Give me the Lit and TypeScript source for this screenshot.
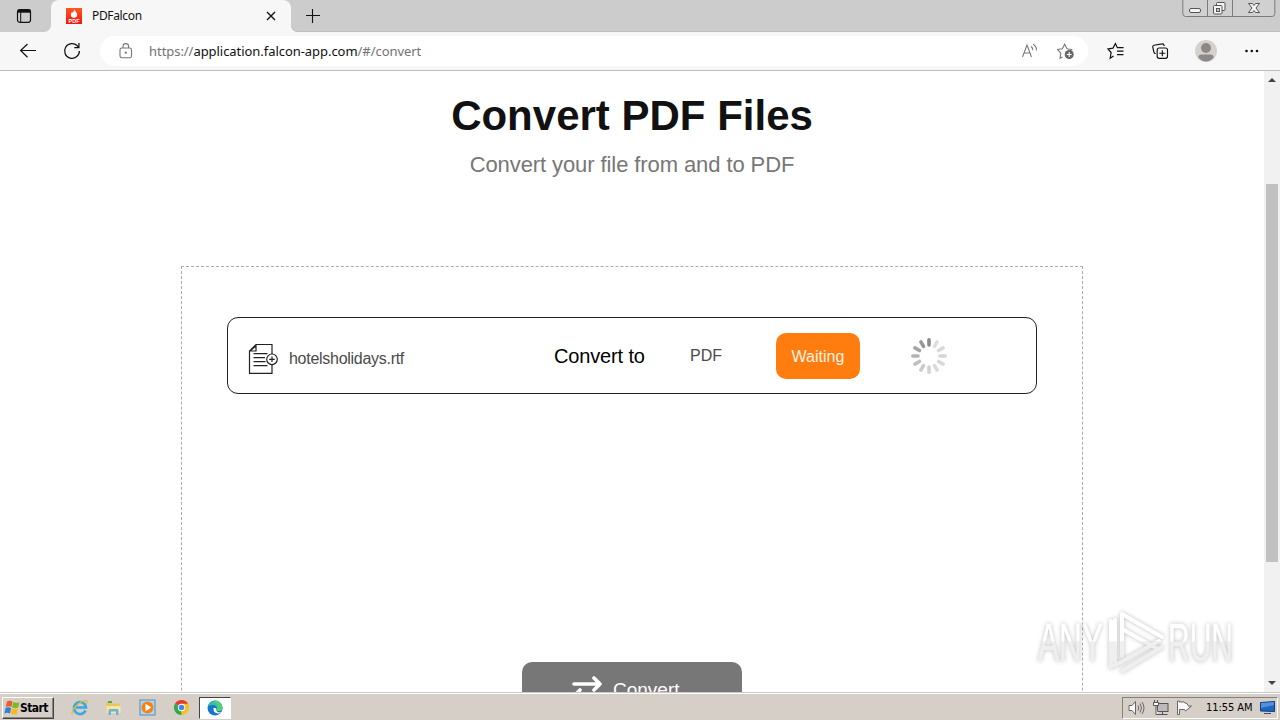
import { LitElement, html, svg, css } from "lit";
import { customElement, property } from "lit/decorators.js";

@customElement("browser-header")
export class BrowserHeader extends LitElement {
    static styles = [
        css`
        :host {
            display: block;
            height: 71px;
            font-family: "Noto Sans", sans-serif;
            color: #111;
        }

        svg {
            display: block;
            flex: none;
        }

        .tabs {
            display: flex;
            height: 32px;
            background: #cccccc;
        }

        .side {
            width: 51px;
            height: 32px;
            box-sizing: border-box;
            padding: 8px 0 0 16px;
            border-bottom-right-radius: 7px;
            background: #cccccc;
        }

        .under {
            background: #f7f7f7;
            display: flex;
        }

        .under.wide {
            flex: 1;
        }

        .tab {
            display: flex;
            align-items: center;
            width: 240px;
            height: 32px;
            box-sizing: border-box;
            padding: 0 15px 0 15px;
            background: #f7f7f7;
            border-radius: 8px 8px 0 0;
        }

        .corner {
            background: #cccccc;
        }

        .tab-title {
            flex: 1;
            margin-left: 10px;
            font-size: 12px;
            letter-spacing: -0.35px;
            line-height: 32px;
        }

        .rest {
            flex: 1;
            display: flex;
            justify-content: space-between;
            background: #cccccc;
            border-bottom-left-radius: 7px;
            box-shadow: inset 0 -1px 0 #bdbdbd;
        }

        .plus {
            margin: 8px 0 0 14px;
        }

        .window {
            margin-right: 4px;
        }

        .toolbar {
            display: flex;
            align-items: center;
            height: 38px;
            background: #f7f7f7;
            border-bottom: 1px solid #bcbcbc;
        }

        .back {
            margin-left: 19px;
        }

        .reload {
            margin-left: 26px;
        }

        .address {
            display: flex;
            align-items: center;
            width: 988px;
            height: 30px;
            margin-left: 19px;
            box-sizing: border-box;
            padding: 0 12px 0 18px;
            border-radius: 15px;
            background: #fff;
        }

        .url {
            flex: 1;
            margin-left: 15px;
            font-size: 13px;
            letter-spacing: -0.05px;
            white-space: nowrap;
            color: #727272;
        }

        .url b {
            font-weight: 400;
            color: #111;
        }

        .address .star {
            margin-left: 17px;
        }

        .favorites {
            margin-left: 19px;
        }

        .collections {
            margin-left: 26px;
        }

        .profile {
            margin-left: 26px;
        }

        .more {
            margin-left: 27px;
        }
    `,
    ];

    render() {
        return html`
        <div class="tabs">
            <div class="under"><div class="side">
                <svg width="16" height="16" viewBox="0 0 16 16" fill="none" stroke="#111">
                    <rect x="1.5" y="1.7" width="13" height="12.6" rx="2.2" stroke-width="1.2"/>
                    <path d="M1.5 3.2h13" stroke-width="3"/>
                    <path d="M4.7 4v10" stroke-width="1"/>
                </svg>
            </div></div>
            <div class="corner"><div class="tab">
                <svg width="16" height="16" viewBox="0 0 16 16">
                    <defs>
                        <linearGradient id="fav" x1="0" y1="0" x2="0" y2="1">
                            <stop offset="0" stop-color="#ff5a1e"/>
                            <stop offset="1" stop-color="#ee1410"/>
                        </linearGradient>
                    </defs>
                    <rect width="16" height="16" fill="url(#fav)"/>
                    <path d="M8.2 1.2C8.6 3 11.2 4.2 11.2 6.6a3.2 3.2 0 0 1-6.4 0c0-1.3.7-1.9 1.2-2.7l.8.9C7.6 3.8 7.9 2.6 8.2 1.2z" fill="#fff"/>
                    <text x="8" y="15" text-anchor="middle" textLength="11" font-family="Liberation Sans, sans-serif" font-size="5.4" font-weight="700" fill="#fff">PDF</text>
                </svg>
                <span class="tab-title">PDFalcon</span>
                <svg width="10" height="10" viewBox="0 0 10 10" stroke="#111" stroke-width="1.4">
                    <path d="M1 1l8 8M9 1l-8 8"/>
                </svg>
            </div></div>
            <div class="under wide"><div class="rest">
                <svg class="plus" width="16" height="16" viewBox="0 0 16 16" stroke="#111" stroke-width="1.1">
                    <path d="M1 7.5h14M7.5 1v14"/>
                </svg>
                <svg class="window" width="94" height="18" viewBox="0 0 94 18" fill="none">
                    <path d="M.8 0v13.500q0 3 3 3h86q3 0 3-3V0" fill="#d0d0d0" stroke="#7b7b7b"/>
                    <path d="M25.500 0v16M50.500 0v16" stroke="#7b7b7b"/>
                    <rect x="7.500" y="8.500" width="11" height="4" rx="1.500" fill="#f4f4f4" stroke="#555"/>
                    <rect x="34.500" y="2.500" width="8.500" height="8" rx="1" fill="#f4f4f4" stroke="#555"/>
                    <rect x="31.500" y="5.500" width="8.500" height="8.500" rx="1" fill="#f4f4f4" stroke="#555"/>
                    <rect x="34.500" y="8.500" width="3" height="3" fill="#ccc" stroke="#555"/>
                    <path d="M66.500 3.500h4l1.500 2 1.500-2h4L74 8l3.500 4.500h-4L72 10.500l-1.500 2h-4L70 8z" fill="#f4f4f4" stroke="#555"/>
                </svg>
            </div></div>
        </div>
        <div class="toolbar">
            <svg class="back" width="18" height="16" viewBox="0 0 18 16" fill="none" stroke="#111" stroke-width="1.2">
                <path d="M17 7.500H1.500M8.500 1L1.600 7.500l6.900 6.800"/>
            </svg>
            <svg class="reload" width="18" height="18" viewBox="0 0 18 18" fill="none" stroke="#111" stroke-width="1.25">
                <path d="M16.400 9A7.400 7.400 0 1 1 14.300 3.800L15.500 5.200M15.900 1v4.600h-4.600"/>
            </svg>
            <div class="address">
                <svg width="16" height="18" viewBox="0 0 16 18" fill="none" stroke="#777" stroke-width="1.100">
                    <rect x="2" y="6" width="11.500" height="9.700" rx="1.800"/>
                    <path d="M5 6V4.400a2.800 2.800 0 0 1 5.600 0V6"/>
                    <circle cx="7.750" cy="10.700" r=".6" fill="#777"/>
                </svg>
                <span class="url">https://<b>application.falcon-app.com</b>/#/convert</span>
                <svg width="18" height="18" viewBox="0 0 18 18" fill="none" stroke="#777" stroke-width="1.050">
                    <path d="M.5 15L5 3l4.500 12M2.100 11h5.900M9 4.500a4 4 0 0 1 1.800 3.800M11 2.300a7 7 0 0 1 3.500 6.200"/>
                </svg>
                <svg class="star" width="19" height="18" viewBox="0 0 19 18">
                    <path d="M5.500 15l-2.500 1.200.8-5.100L.6 7.500l4.700-.8L7.700 2.200l2.300 4.500 4.700.8-1.500 1.500" fill="none" stroke="#777" stroke-width="1.100"/>
                    <circle cx="12.200" cy="12.500" r="4.500" fill="#666"/>
                    <path d="M9.700 12.500h5M12.200 10v5" stroke="#fff" stroke-width="1.100"/>
                </svg>
            </div>
            <svg class="favorites" width="18" height="18" viewBox="0 0 18 18" fill="none" stroke="#111" stroke-width="1.200">
                <path d="M6.500 14l-3.300 2.200.9-5.700L1 6.900l5-.8L8.400 1.500l2 4.200h6.200M10 9.200h6.500M10 12.700h6.500"/>
            </svg>
            <svg class="collections" width="18" height="18" viewBox="0 0 18 18" fill="none" stroke="#111" stroke-width="1.150">
                <rect x="6.200" y="6" width="10.300" height="10.300" rx="2"/>
                <path d="M11.300 8.200v6M8.300 11.200h6M13.300 4l-.5-1.300q-.5-1-1.600-.8L3 3.200q-1.500.4-1.300 1.800l1.200 5q.4 1.500 1.800 1.800"/>
            </svg>
            <svg class="profile" width="22" height="22" viewBox="0 0 22 22">
                <circle cx="11" cy="11" r="11" fill="#d4d1ce"/>
                <circle cx="11" cy="8" r="5" fill="#8c8885"/>
                <path d="M3.300 17.500q0-3 3.500-3h8.400q3.500 0 3.500 3-3.500 4-7.700 4t-7.700-4z" fill="#8c8885"/>
            </svg>
            <svg class="more" width="16" height="4" viewBox="0 0 16 4" fill="#111">
                <circle cx="2.500" cy="2" r="1.300"/><circle cx="7.800" cy="2" r="1.300"/><circle cx="13" cy="2" r="1.300"/>
            </svg>
        </div>
        `;
    }
}

@customElement("file-row")
export class FileRow extends LitElement {
    @property() name = "";
    @property() target = "";
    @property() status = "";

    static styles = [
        css`
        :host {
            display: grid;
            grid-template-columns: 326px 136px 86px 84px 1fr;
            align-items: center;
            height: 77px;
            box-sizing: border-box;
            border: 1px solid #222;
            border-radius: 11px;
            font-family: "Liberation Sans", Arial, sans-serif;
            font-size: 16px;
            color: #4a4a4a;
        }

        .file {
            display: flex;
            align-items: center;
            padding: 6px 0 0 20px;
        }

        .name {
            margin-left: 10px;
            letter-spacing: -0.28px;
        }

        .label {
            padding-top: 1px;
            font-size: 20px;
            letter-spacing: -0.15px;
            color: #000;
        }

        .status {
            height: 46px;
            box-sizing: border-box;
            padding-top: 1px;
            border-radius: 10px;
            background: #ff7d0f;
            color: #fff3e4;
            line-height: 46px;
            text-align: center;
        }

        .spinner {
            margin-left: 50px;
        }
    `,
    ];

    render() {
        const shades = ["#8b8b8b", "#dedede", "#d9d9d9", "#d6d6d6", "#d8d8d8", "#d9d9d9", "#d2d2d2", "#cbcbcb", "#c0c0c0", "#b3b3b3", "#a5a5a5", "#989898"];
        return html`
        <div class="file">
            <svg width="31" height="32" viewBox="0 0 31 32" fill="none" stroke="#222" stroke-width="1.200">
                <path d="M24 11V1.500H8L1.500 8v22.300H24V21M8 1.500V8H1.500M2.500 7.500L8 3"/>
                <path d="M5.500 10.700h14M5.500 14.700h11.500M5.500 18.700h12M5.500 22.700h14"/>
                <circle cx="24" cy="16.300" r="5.300"/>
                <path d="M21.200 16.300h5.600M24 13.500v5.600"/>
            </svg>
            <span class="name">${this.name}</span>
        </div>
        <span class="label">Convert to</span>
        <span>${this.target}</span>
        <div class="status">${this.status}</div>
        <svg class="spinner" width="38" height="38" viewBox="-19 -19 38 38" stroke-width="3.600" stroke-linecap="round">
            ${shades.map((shade, i) => svg`<path d="M0 -16.200V-11" stroke=${shade} transform="rotate(${i * 30})"/>`)}
        </svg>
        `;
    }
}

@customElement("desktop-taskbar")
export class DesktopTaskbar extends LitElement {
    static styles = [
        css`
        :host {
            display: flex;
            align-items: center;
            height: 28px;
            box-sizing: border-box;
            padding: 3px 2px 1px;
            border-top: 1px solid #cdcac5;
            box-shadow: inset 0 1px 0 #fff;
            background: #d5cfc8;
            font-family: "DejaVu Sans Condensed", "DejaVu Sans", sans-serif;
            font-size: 11px;
            color: #000;
        }

        svg {
            display: block;
            flex: none;
        }

        .start {
            display: flex;
            align-items: center;
            width: 52px;
            height: 22px;
            box-sizing: border-box;
            padding-left: 1px;
            border: 1px solid;
            border-color: #fff #444 #444 #fff;
            box-shadow: inset -1px -1px 0 #8a8680;
            font-size: 12px;
            font-weight: 700;
            letter-spacing: -0.55px;
        }

        .apps {
            display: flex;
            align-items: center;
            flex: 1;
            gap: 17px;
            padding-left: 17px;
        }

        .active {
            display: flex;
            align-items: center;
            justify-content: center;
            width: 32px;
            height: 22px;
            margin-left: -8px;
            box-sizing: border-box;
            border: 1px solid;
            border-color: #444 #fff #fff #444;
            background: #fff;
        }

        .tray {
            display: flex;
            align-items: center;
            width: 156px;
            height: 22px;
            box-sizing: border-box;
            padding-left: 5px;
            border: 1px solid;
            border-color: #85817b #fff #fff #85817b;
        }

        .tray svg {
            margin-right: 8px;
        }

        .clock {
            flex: 1;
            margin-left: 5px;
            white-space: nowrap;
            letter-spacing: -0.05px;
        }

        .tray svg.desktop {
            margin-right: 1px;
        }
    `,
    ];

    render() {
        return html`
        <div class="start">
            <svg width="16" height="16" viewBox="0 0 16 16">
                <path d="M3 1.500q2.800-1.700 5.500 0L7.500 7q-2.800-1.400-5.700 0z" fill="#ee5a24"/>
                <path d="M9.200 2q2.700 1.400 6.300.2L14.200 7.500q-3 1.300-6 0z" fill="#7cb928"/>
                <path d="M1.600 7.900q2.700-1.400 5.500 0L6 13.500q-2.700-1.400-5.600 0z" fill="#2f80d8"/>
                <path d="M8 8.500q3 1.200 6 .2L12.800 14q-3 1-5.900-.3z" fill="#fbb914"/>
            </svg>
            <span>Start</span>
        </div>
        <div class="apps">
            <svg width="17" height="17" viewBox="0 0 17 17" fill="none">
                <path d="M14.500 11.500A6 6 0 1 1 15 8.500H5" stroke="#38a8e4" stroke-width="2.600"/>
                <path d="M1.500 15.500C-1 12 9 1 15.500 1.700q1.200.6.200 3" stroke="#e8b833" stroke-width="1.200"/>
            </svg>
            <svg width="17" height="17" viewBox="0 0 17 17">
                <path d="M1 3h5l1 1.500h8V14H1z" fill="#e9c566"/>
                <path d="M3 2h4v2H3z" fill="#54a858"/>
                <path d="M1.500 7h14v7h-14z" fill="#f8e6a0"/>
                <path d="M3.500 16v-4.500q0-1.500 1.500-1.500h7q1.500 0 1.500 1.500V16h-2.500v-3.500h-5V16z" fill="#68b5df"/>
            </svg>
            <svg width="17" height="17" viewBox="0 0 17 17">
                <rect x="1" y="1" width="15" height="15" fill="#b4d4ee" stroke="#4f8fc4"/>
                <circle cx="8.500" cy="8.500" r="6" fill="#f58212"/>
                <path d="M6.500 4.800l5.800 3.700-5.800 3.700z" fill="#fff"/>
            </svg>
            <svg width="17" height="17" viewBox="0 0 17 17">
                <circle cx="8.500" cy="8.500" r="7.500" fill="#fbc116"/>
                <path d="M8.500 8.500L2 4.700A7.500 7.500 0 0 1 15 4.700z" fill="#e33b2e"/>
                <path d="M8.500 8.500V16A7.500 7.500 0 0 1 2 4.700z" fill="#2da94f"/>
                <path d="M8.500 16l3.300-5.500L15 4.700H8.500z" fill="#fbc116"/>
                <circle cx="8.500" cy="8.500" r="3.700" fill="#fff"/>
                <circle cx="8.500" cy="8.500" r="2.800" fill="#4285f4"/>
            </svg>
            <div class="active">
                <svg width="16" height="16" viewBox="0 0 16 16">
                    <circle cx="8" cy="8" r="7.500" fill="#1577c9"/>
                    <path d="M.6 7A7.500 7.500 0 0 1 15.500 8q0 3-3.500 3-2.500 0-2.500-1.200C11 7 8 4.500 5 5 2.500 5.300 1 6 .6 7z" fill="#35bfae"/>
                    <path d="M9 .7q6 .8 6.500 7.300 0 3-3.500 3-2.500 0-2.500-1.200C11.500 7 11 4 7 2.500z" fill="#55cf70"/>
                    <path d="M6.500 8q-.5 4.500 4 5.500 2 .3 4-1-3 .2-4.500-1-.8-.8-.6-1.700 0-1.500-1.400-1.800z" fill="#fff"/>
                </svg>
            </div>
        </div>
        <div class="tray">
            <svg width="17" height="16" viewBox="0 0 17 16" fill="none" stroke="#666">
                <path d="M1 5.500h3l3.500-4v13L4 10.500H1z" fill="#fafafa"/>
                <path d="M10 5.500q1.500 2.500 0 5M12 3.500q3 4.500 0 9M14 2q4 6 0 12"/>
            </svg>
            <svg width="16" height="16" viewBox="0 0 16 16" stroke="#555">
                <rect x="4.500" y="3.500" width="10.500" height="8" fill="#bbb"/>
                <path d="M5 14.500h9.500M9.500 12v2" fill="none"/>
                <path d="M.5 2.500h5v3h-5zM1.500 2.500V0M4.500 2.500V0M3 5.500v9h2" fill="#fff"/>
            </svg>
            <svg width="16" height="16" viewBox="0 0 16 16" stroke="#666" fill="#fafafa">
                <path d="M.5 1v13.500h2V9.500h5l1 1.500 6-5-3 .2L10 3.500 8 3 7 2H2.500V1z"/>
            </svg>
            <span class="clock">11:55 AM</span>
            <svg class="desktop" width="17" height="14" viewBox="0 0 17 14">
                <path d="M1.500 1.500l14-1v10l-14-.5z" fill="#2164bd" stroke="#123e7e"/>
                <path d="M2 2l13-1v3L2 7z" fill="#4f93df"/>
                <path d="M5 12.500h7" stroke="#35506f"/>
            </svg>
        </div>
        `;
    }
}

@customElement("app-root")
export class AppRoot extends LitElement {
    static styles = [
        css`
        :host {
            display: flex;
            flex-direction: column;
            width: 1280px;
            height: 720px;
            position: relative;
            overflow: hidden;
            background: #fff;
            font-family: "Liberation Sans", Arial, sans-serif;
        }

        .view {
            display: flex;
            height: 621px;
            overflow: hidden;
        }

        .page {
            flex: 1;
            display: flex;
            flex-direction: column;
            align-items: center;
        }

        h1 {
            margin: 20px 0 0;
            font-size: 42px;
            line-height: 50px;
            color: #111;
        }

        .subtitle {
            margin: 11px 0 0;
            font-size: 22px;
            line-height: 26px;
            letter-spacing: -0.09px;
            color: #777;
        }

        .dropzone {
            display: flex;
            flex-direction: column;
            justify-content: space-between;
            align-items: center;
            flex: none;
            width: 902px;
            height: 500px;
            margin-top: 88px;
            padding: 50px 45px 47px;
            box-sizing: border-box;
            border: 1px dashed #aaa;
        }

        file-row {
            width: 810px;
        }

        .convert {
            display: flex;
            align-items: center;
            width: 220px;
            height: 56px;
            box-sizing: border-box;
            padding: 0 0 0 50px;
            border-radius: 10px;
            background: #777;
            color: #fff;
            font-size: 19px;
        }

        .convert svg {
            margin-right: 10px;
        }

        .scrollbar {
            display: flex;
            flex-direction: column;
            align-items: center;
            width: 16px;
            background: #f1f1f1;
        }

        .thumb {
            width: 12px;
            height: 378px;
            margin: 96px 0 auto;
            background: #c1c1c1;
        }

        .scrollbar svg {
            display: block;
        }

        .watermark {
            position: absolute;
            left: 1030px;
            top: 602px;
            filter: drop-shadow(0 0 2px rgba(0, 0, 0, 0.26));
        }
    `,
    ];

    render() {
        return html`
        <browser-header></browser-header>
        <div class="view">
            <div class="page">
                <h1>Convert PDF Files</h1>
                <p class="subtitle">Convert your file from and to PDF</p>
                <div class="dropzone">
                    <file-row name="hotelsholidays.rtf" target="PDF" status="Waiting"></file-row>
                    <div class="convert">
                        <svg width="31" height="28" viewBox="0 0 31 28" fill="none" stroke="#fff" stroke-width="3.600" stroke-linecap="round" stroke-linejoin="round">
                            <path d="M2 8h26M22 2l6 6-6 6M29 20H3M8 14l-6 6 6 6"/>
                        </svg>
                        <span>Convert</span>
                    </div>
                </div>
            </div>
            <div class="scrollbar">
                <svg width="16" height="17" viewBox="0 0 16 17"><path d="M4 11l4-4 4 4z" fill="#444"/></svg>
                <div class="thumb"></div>
                <svg width="16" height="17" viewBox="0 0 16 17"><path d="M4 6l4 4 4-4z" fill="#444"/></svg>
            </div>
        </div>
        <desktop-taskbar></desktop-taskbar>
        <svg class="watermark" width="230" height="80" viewBox="0 0 230 80">
            <defs>
                <linearGradient id="fade" gradientUnits="userSpaceOnUse" x1="0" y1="0" x2="0" y2="80">
                    <stop offset="0.480" stop-color="#fff"/>
                    <stop offset="0.500" stop-color="#efefef"/>
                </linearGradient>
            </defs>
            <g font-family="Liberation Sans, sans-serif" font-size="54" fill="url(#fade)" stroke="url(#fade)" stroke-width="0.500">
                <text x="8" y="58.500" textLength="65" lengthAdjust="spacingAndGlyphs">ANY</text>
                <text x="138" y="58.500" textLength="65" lengthAdjust="spacingAndGlyphs">RUN</text>
            </g>
            <g fill="none" stroke="url(#fade)" stroke-width="4" stroke-linejoin="round" stroke-linecap="round">
                <path d="M92 54V12l40 23M92 27l36 20"/>
                <path d="M81 19v46l10-5 38-21"/>
                <path d="M85 18v42M92 69l40-24"/>
            </g>
        </svg>
        `;
    }
}
